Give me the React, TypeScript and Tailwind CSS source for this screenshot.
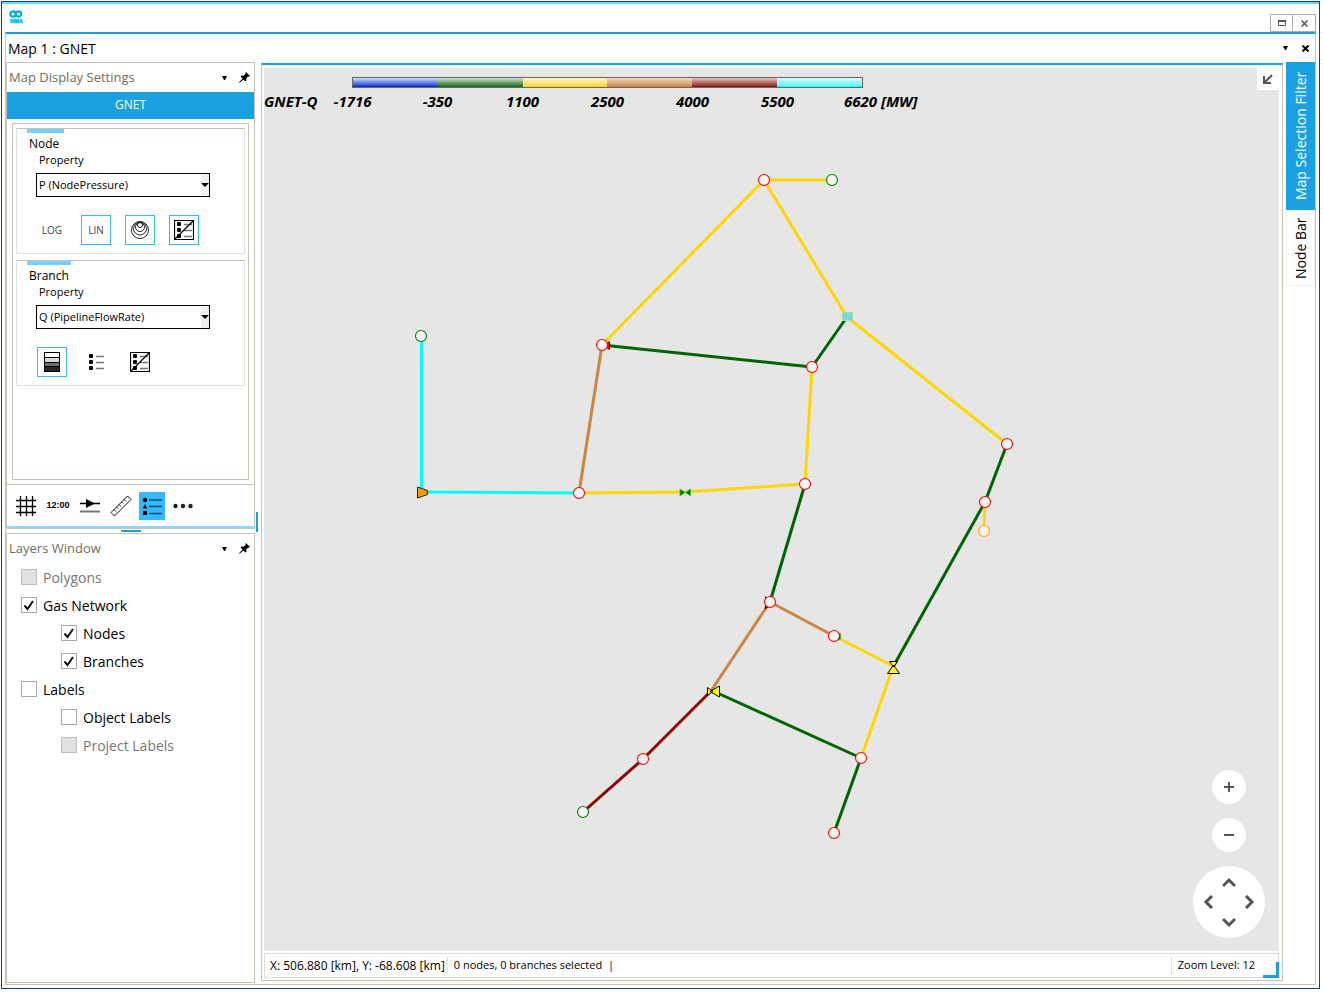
import React, { useState } from 'react';

type Point = [number, number];

const GREEN = '#006400';
const GOLD = '#ffd700';
const BROWN = '#cd853f';
const MAROON = '#8b0000';
const CYAN = '#00ffff';

const branches: { from: Point; to: Point; color: string }[] = [
  { from: [764, 180], to: [832, 180], color: GOLD },
  { from: [764, 180], to: [602, 345], color: GOLD },
  { from: [764, 180], to: [847, 317], color: GOLD },
  { from: [847, 317], to: [1007, 444], color: GOLD },
  { from: [847, 317], to: [812, 367], color: GREEN },
  { from: [602, 345], to: [812, 367], color: GREEN },
  { from: [602, 345], to: [579, 493], color: BROWN },
  { from: [421.5, 336], to: [421.5, 492], color: CYAN },
  { from: [421, 492], to: [579, 493], color: CYAN },
  { from: [579, 493], to: [685, 492], color: GOLD },
  { from: [685, 492], to: [805, 484], color: GOLD },
  { from: [812, 367], to: [805, 484], color: GOLD },
  { from: [805, 484], to: [770, 602], color: GREEN },
  { from: [1007, 444], to: [985, 502], color: GREEN },
  { from: [985, 502], to: [984, 531], color: GOLD },
  { from: [985, 502], to: [893, 667], color: GREEN },
  { from: [770, 602], to: [834, 636], color: BROWN },
  { from: [834, 636], to: [893, 666], color: GOLD },
  { from: [770, 602], to: [711, 691], color: BROWN },
  { from: [893, 667], to: [861, 758], color: GOLD },
  { from: [713, 691], to: [861, 758], color: GREEN },
  { from: [711, 691], to: [643, 759], color: MAROON },
  { from: [643, 759], to: [583, 812], color: MAROON },
  { from: [861, 758], to: [834, 833], color: GREEN },
];

const nodes: { at: Point; color: string }[] = [
  { at: [764, 180], color: '#ff0000' },
  { at: [832, 180], color: '#008000' },
  { at: [602, 345], color: '#ff0000' },
  { at: [812, 367], color: '#ff0000' },
  { at: [421, 336], color: '#008000' },
  { at: [579, 493], color: '#ff0000' },
  { at: [805, 484], color: '#ff0000' },
  { at: [1007, 444], color: '#ff0000' },
  { at: [985, 502], color: '#ff0000' },
  { at: [984, 531], color: '#ffa500' },
  { at: [770, 602], color: '#ff0000' },
  { at: [834, 636], color: '#ff0000' },
  { at: [643, 759], color: '#ff0000' },
  { at: [583, 812], color: '#008000' },
  { at: [861, 758], color: '#ff0000' },
  { at: [834, 833], color: '#ff0000' },
];

const legendColors = [
  'from-[#d9d9fa] to-[#1414c8]',
  'from-[#d3e3d3] to-[#0a640a]',
  'from-[#fff6c4] to-[#ffd200]',
  'from-[#f0dac6] to-[#cd853f]',
  'from-[#e3c6c8] to-[#860808]',
  'from-[#d4ffff] to-[#00ffff]',
];

const legendValues = ['-1716', '-350', '1100', '2500', '4000', '5500'];

const initialLayers = [
  { id: 'polygons', label: 'Polygons', checked: false, disabled: true, child: false },
  { id: 'gas', label: 'Gas Network', checked: true, disabled: false, child: false },
  { id: 'nodes', label: 'Nodes', checked: true, disabled: false, child: true },
  { id: 'branches', label: 'Branches', checked: true, disabled: false, child: true },
  { id: 'labels', label: 'Labels', checked: false, disabled: false, child: false },
  { id: 'objectLabels', label: 'Object Labels', checked: false, disabled: false, child: true },
  { id: 'projectLabels', label: 'Project Labels', checked: false, disabled: true, child: true },
];

const Caret = () => (
  <svg width="5" height="4" viewBox="0 0 5 4">
    <path d="M0 0h5L3 4H2z" fill="#000" />
  </svg>
);

const Pin = () => (
  <svg width="11" height="11" viewBox="0 0 11 11">
    <path d="M7 0l4 4-1.2.7-.8-.2-1.8 2 .3 2-1 1L4.400 7.400.6 10.800 0 10.200 3.600 6.600 1.500 4.500l1-1 2 .3 2-1.800-.1-1z" fill="#000" />
  </svg>
);

const Logo = () => (
  <svg width="14" height="14" viewBox="0 0 14 14">
    <g fill="none" stroke="#00aeef" strokeWidth="2.2">
      <circle cx="4" cy="4" r="2.700" />
      <circle cx="9.500" cy="4" r="2.700" />
    </g>
    <text x="1" y="13" fontSize="5" fontWeight="800" fill="#00aeef" stroke="#00aeef" strokeWidth=".4" fontFamily="Liberation Sans, sans-serif">
      SIMA
    </text>
  </svg>
);

const BulletList = ({ framed }: { framed?: boolean }) => (
  <svg width="20" height="20" viewBox="0 0 20 20">
    <g fill="#000">
      <rect x="3" y="2" width="4" height="4" rx="1" />
      <rect x="3" y="8" width="4" height="4" rx="1" />
      <rect x="3" y="14" width="4" height="4" rx="1" />
    </g>
    <path d="M10 4.500h8M10 10.500h8M10 16.500h8" stroke="#777" strokeWidth="1.500" />
    {framed && <path d="M.5.5h19v19H.5zM1 19L19 1" fill="none" stroke="#000" strokeWidth="1.200" />}
  </svg>
);

const Rings = () => (
  <svg width="20" height="20" viewBox="0 0 20 20" fill="none" stroke="#222" strokeWidth="1">
    <circle cx="10" cy="10" r="8.500" />
    <circle cx="10" cy="8.500" r="6.500" />
    <circle cx="10" cy="7" r="4.500" />
    <circle cx="10" cy="5" r="2.500" />
  </svg>
);

const Bands = () => (
  <svg width="16" height="20" viewBox="0 0 16 20">
    <rect y="0" width="16" height="20" fill="#000" />
    <rect x="1" y="1" width="14" height="4" fill="#fff" />
    <rect x="1" y="6" width="14" height="4" fill="#d8d8d8" />
    <rect x="1" y="11" width="14" height="3" fill="#707070" />
    <rect x="1" y="15" width="14" height="4" fill="#282828" />
  </svg>
);

const toolClass = 'flex size-[30px] items-center justify-center border text-[10px] text-[#444]';

const ToolButton = ({ label, active, children }: { label: string; active?: boolean; children: React.ReactNode }) => (
  <button aria-label={label} className={`${toolClass} ${active ? 'border-[#35b8fd]' : 'border-transparent'}`}>
    {children}
  </button>
);

interface PropertyGroupProps {
  title: string;
  value: string;
  accent: string;
  children: React.ReactNode;
}

const PropertyGroup = ({ title, value, accent, children }: PropertyGroupProps) => {
  const id = `${title.toLowerCase()}-property`;

  return (
    <section className="h-[126px] border border-[#e0e0d8] border-t-[#c4c4b4] pl-[10px]">
      <div className={`h-1 bg-[#75d1ff] ${accent}`} />
      <h2 className="ml-0.5 text-[12px] leading-[22px]">{title}</h2>
      <label htmlFor={id} className="-mt-0.5 ml-3 block text-[11px] leading-[14px]">
        Property
      </label>
      <div className="relative ml-[9px] mt-1.5 w-[174px]">
        <select id={id} className="block h-6 w-full appearance-none border border-black bg-white pl-0.5 text-[11px]">
          <option>{value}</option>
        </select>
        <span className="pointer-events-none absolute inset-y-px right-px flex w-2 items-center justify-center bg-[#f0f0f0]">
          <svg width="8" height="4" viewBox="0 0 8 4">
            <path d="M0 0h8L4 4z" fill="#000" />
          </svg>
        </span>
      </div>
      <div className="ml-[10px] mt-[18px] flex gap-[14px]">{children}</div>
    </section>
  );
};

const PanelHeader = ({ title }: { title: string }) => (
  <header className="flex h-[29px] shrink-0 items-center pl-0.5 pr-1">
    <h1 className="flex-1 text-[13px] text-[#6d6d60]">{title}</h1>
    <button aria-label={`${title} menu`} className="mr-3">
      <Caret />
    </button>
    <button aria-label={`Pin ${title}`}>
      <Pin />
    </button>
  </header>
);

const Toolbar = () => (
  <div className="flex h-[44px] shrink-0 items-center border-t border-[#c4c4b4] border-b-2 border-b-[#8fd8ff] pl-2">
    <button aria-label="Grid" className="w-6">
      <svg width="22" height="22" viewBox="0 0 22 22" stroke="#000" strokeWidth="1.300">
        <path d="M1 5.500h20M1 11.500h20M1 17.500h20M5.500 1v20M11.500 1v20M17.500 1v20" />
      </svg>
    </button>
    <button className="ml-[7px] w-6 whitespace-nowrap font-['Liberation_Sans',sans-serif] text-[9px] font-bold">12:00</button>
    <button aria-label="Flow direction" className="ml-[9px] w-6">
      <svg width="22" height="18" viewBox="0 0 22 18">
        <path d="M1 6.500h20" stroke="#000" strokeWidth="1.500" />
        <path d="M7 2l9 4.500L7 11z" fill="#000" />
        <path d="M1 14.500h20" stroke="#777" strokeWidth="2" />
      </svg>
    </button>
    <button aria-label="Measure" className="ml-[7px] w-6">
      <svg width="22" height="22" viewBox="0 0 22 22" fill="none" stroke="#111">
        <path d="M1 17.500L17.500 1 21 4.500 4.500 21z" />
        <path d="M4 14.500l2 2M6.500 12l1.500 1.500M9 9.500l2 2M11.500 7l1.500 1.500M14 4.500l2 2" />
      </svg>
    </button>
    <button aria-label="Legend" className="ml-[5px] flex h-7 w-[26px] items-center justify-center bg-[#35b8fd]">
      <svg width="20" height="20" viewBox="0 0 20 20">
        <circle cx="3" cy="4" r="2.200" />
        <path d="M.8 12.500L3 8l2.200 4.500zM1 15h4v4H1z" />
        <path d="M7 4h13M7 10.500h13M7 17.500h13" stroke="#174e70" strokeWidth="1.500" />
      </svg>
    </button>
    <button aria-label="More" className="ml-2">
      <svg width="20" height="6" viewBox="0 0 20 6" fill="#222">
        <circle cx="2.500" cy="3" r="2.200" />
        <circle cx="10" cy="3" r="2.200" />
        <circle cx="17.500" cy="3" r="2.200" />
      </svg>
    </button>
  </div>
);

const Layers = () => {
  const [layers, setLayers] = useState(initialLayers);

  const toggle = (id: string) => {
    setLayers(layers.map((layer) => (layer.id === id ? { ...layer, checked: !layer.checked } : layer)));
  };

  return (
    <ul>
      {layers.map((layer) => (
        <li key={layer.id} className={`flex h-7 items-center ${layer.child ? 'pl-[54px]' : 'pl-[14px]'}`}>
          <span className="relative size-4">
            <input
              id={layer.id}
              type="checkbox"
              checked={layer.checked}
              disabled={layer.disabled}
              onChange={() => toggle(layer.id)}
              className="block size-4 appearance-none border border-[#a9a9a9] bg-white disabled:border-[#bcbcbc] disabled:bg-[#e1e1e1]"
            />
            {layer.checked && (
              <svg className="pointer-events-none absolute inset-0" width="16" height="16" viewBox="0 0 16 16" fill="none">
                <path d="M3.500 8.500l3 3.500L12 4" stroke="#111" strokeWidth="2" />
              </svg>
            )}
          </span>
          <label htmlFor={layer.id} className={`ml-1.5 text-[14px] ${layer.disabled ? 'text-[#777]' : 'text-black'}`}>
            {layer.label}
          </label>
        </li>
      ))}
    </ul>
  );
};

const Sidebar = () => (
  <aside className="flex w-[249px] shrink-0 flex-col">
    <div className="flex h-[467px] shrink-0 flex-col border border-[#c4c4b4]">
      <PanelHeader title="Map Display Settings" />
      <button className="h-[27px] shrink-0 bg-[#1ba1e2] text-[12px] leading-[25px] pb-0.5 text-white">GNET</button>
      <div className="mx-[5px] mb-1 mt-1 flex flex-1 flex-col gap-1.5 border border-[#c4c4b4] px-[3px] pt-1">
        <PropertyGroup title="Node" value="P (NodePressure)" accent="w-[37px]">
          <ToolButton label="Logarithmic">LOG</ToolButton>
          <ToolButton label="Linear" active>LIN</ToolButton>
          <ToolButton label="Circles" active><Rings /></ToolButton>
          <ToolButton label="Hide list" active><BulletList framed /></ToolButton>
        </PropertyGroup>
        <PropertyGroup title="Branch" value="Q (PipelineFlowRate)" accent="w-11">
          <ToolButton label="Colour bands" active><Bands /></ToolButton>
          <ToolButton label="List"><BulletList /></ToolButton>
          <ToolButton label="Hide list"><BulletList framed /></ToolButton>
        </PropertyGroup>
      </div>
      <Toolbar />
    </div>
    <div className="flex h-1 shrink-0 items-center justify-center">
      <div className="h-0.5 w-5 bg-[#1ba1e2]" />
    </div>
    <div className="flex-1 border border-[#c4c4b4]">
      <PanelHeader title="Layers Window" />
      <Layers />
    </div>
  </aside>
);

const Network = () => (
  <svg className="block" width="1015" height="883" viewBox="264 68 1015 883">
    {branches.map((b, i) => (
      <line key={i} x1={b.from[0]} y1={b.from[1]} x2={b.to[0]} y2={b.to[1]} stroke={b.color} strokeWidth="3" />
    ))}
    <path d="M765.500 596.500v12l5-3M609.500 341.500v8" fill="none" stroke="#000" />
    <path d="M609 341v9l-5-4z" fill="#f00" />
    <path d="M837 633h4v7h-4z" fill={GREEN} stroke="#90ee90" />
    <path d="M680 489l5 3.500-5 3.500zM690.500 489l-5 3.500 5 3.500z" fill={GREEN} stroke="#32cd32" />
    <rect x="842.500" y="312.500" width="10" height="8" fill="#87ceeb" stroke="#90ee90" />
    <path d="M417.500 487v11l10-3.500v-4z" fill="#ff9800" stroke="#222" />
    <g fill="#ffff00" stroke="#000">
      <path d="M889.500 661.500h8L893.500 667zM893.500 665l-6 8.500h12z" />
      <path d="M707.500 687.500v8l5.500-4zM710 691.500l9.500-5.500v11z" />
    </g>
    {nodes.map((n, i) => (
      <circle key={i} cx={n.at[0]} cy={n.at[1]} r="5.500" fill="#f8f4f4" stroke={n.color} strokeWidth="1.100" />
    ))}
  </svg>
);

const Legend = () => (
  <div className="absolute left-0 top-[9px] font-['Open_Sans','Noto_Sans',sans-serif] text-[15px] font-bold italic leading-5">
    <div className="ml-[88px] flex h-[11px] w-[511px] border border-[#666]">
      {legendColors.map((color) => (
        <div key={color} className={`flex-1 bg-linear-to-b ${color}`} />
      ))}
    </div>
    <div className="mt-[3px] flex whitespace-nowrap">
      <span className="w-[46px]">GNET-Q</span>
      {legendValues.map((value) => (
        <span key={value} className="w-[85px] text-center">{value}</span>
      ))}
      <span className="pl-6">6620 [MW]</span>
    </div>
  </div>
);

const roundClass = 'flex size-[34px] items-center justify-center rounded-full bg-white';

const ZoomControls = () => (
  <div className="absolute bottom-[13px] right-[14px] flex flex-col items-center gap-[14px]">
    <button aria-label="Zoom in" className={roundClass}>
      <svg width="10" height="10" viewBox="0 0 10 10">
        <path d="M0 5h10M5 0v10" stroke="#555550" strokeWidth="2" />
      </svg>
    </button>
    <button aria-label="Zoom out" className={roundClass}>
      <svg width="10" height="10" viewBox="0 0 10 10">
        <path d="M0 5h10" stroke="#555550" strokeWidth="2" />
      </svg>
    </button>
    <div className="grid size-[72px] grid-cols-3 grid-rows-3 place-items-center rounded-full bg-white p-1.5">
      <PanButton label="Pan up" className="col-start-2" path="M1 11l6-6 6 6" />
      <PanButton label="Pan left" className="col-start-1 row-start-2" path="M10 1L4 7l6 6" />
      <PanButton label="Pan right" className="col-start-3 row-start-2" path="M4 1l6 6-6 6" />
      <PanButton label="Pan down" className="col-start-2 row-start-3" path="M1 4l6 6 6-6" />
    </div>
  </div>
);

const PanButton = ({ label, className, path }: { label: string; className: string; path: string }) => (
  <button aria-label={label} className={className}>
    <svg width="14" height="14" viewBox="0 0 14 14" fill="none">
      <path d={path} stroke="#555550" strokeWidth="3" />
    </svg>
  </button>
);

const MapPanel = () => (
  <main className="mt-px mb-0.5 flex min-w-0 flex-1 flex-col border border-t-2 border-[#c4c4b4] border-t-[#1ba1e2] pb-0.5 pl-0.5 pr-[3px] pt-[3px]">
    <div className="relative min-h-0 flex-1 overflow-hidden bg-[#e6e6e6]">
      <Network />
      <Legend />
      <button aria-label="Collapse" className="absolute right-0 top-0 flex size-[22px] items-center justify-center bg-white">
        <svg width="10" height="10" viewBox="0 0 10 10" fill="none" stroke="#555550" strokeWidth="2">
          <path d="M9 1L2 8M1 2v7h7" />
        </svg>
      </button>
      <ZoomControls />
    </div>
    <footer className="relative mt-0.5 flex h-[25px] shrink-0 items-center border border-[#dcdcd4] pl-[5px] text-[11px]">
      <span className="text-[12px]">X: 506.880 [km], Y: -68.608 [km]</span>
      <span className="ml-0.5 h-4 border-l border-dashed border-[#a8e0ff]" />
      <span className="ml-1.5">0 nodes, 0 branches selected&nbsp; |</span>
      <span className="ml-auto h-4 border-l border-dashed border-[#a8e0ff]" />
      <span className="ml-1.5 mr-[23px]">Zoom Level: 12</span>
      <span className="absolute -bottom-px -right-px size-4 border-b-[3px] border-r-[3px] border-[#1ba1e2]" />
    </footer>
  </main>
);

const App = () => {
  return (
    <div className="h-screen bg-white pb-1 pl-px pr-[3px] pt-px font-['Open_Sans','Noto_Sans',sans-serif] text-black">
      <div className="flex h-full flex-col border border-[#064a6c]">
        <div className="flex h-[30px] shrink-0 border-t-2 border-[#75d1ff] pl-[7px] pr-[3px]">
          <div className="pt-1.5">
            <Logo />
          </div>
          <div className="ml-auto mt-[10px] flex h-[18px] border border-[#b0b0a8]">
            <button aria-label="Maximize" className="flex w-[22px] items-center justify-center border-r border-[#b0b0a8]">
              <svg width="8" height="6" viewBox="0 0 8 6">
                <path d="M.5 1h7v4.500h-7z" fill="none" stroke="#555550" />
                <path d="M0 1h8" stroke="#555550" strokeWidth="2" />
              </svg>
            </button>
            <button aria-label="Close window" className="flex w-[22px] items-center justify-center">
              <svg width="7" height="7" viewBox="0 0 7 7">
                <path d="M.5.5l6 6M6.500.5l-6 6" stroke="#555550" strokeWidth="1.500" />
              </svg>
            </button>
          </div>
        </div>
        <div className="ml-[3px] mr-[3px] mb-[3px] flex min-h-0 flex-1 flex-col border border-t-2 border-[#c4c4b4] border-t-[#1ba1e2]">
          <div className="flex h-7 shrink-0 items-center pl-0.5 pr-1.5">
            <span className="flex-1 text-[14px]">Map 1 : GNET</span>
            <button aria-label="Map menu" className="mr-[14px]">
              <Caret />
            </button>
            <button aria-label="Close map">
              <svg width="7" height="7" viewBox="0 0 7 7">
                <path d="M.5.5l6 6M6.500.5l-6 6" stroke="#000" strokeWidth="2" />
              </svg>
            </button>
          </div>
          <div className="flex min-h-0 flex-1 pb-px">
            <Sidebar />
            <div className="flex w-1.5 shrink-0 flex-col pl-px">
              <div className="mt-[450px] h-5 w-0.5 shrink-0 bg-[#1ba1e2]" />
            </div>
            <MapPanel />
            <nav className="ml-[3px] flex w-[29px] shrink-0 flex-col text-[14px] leading-[29px]">
              <button className="h-[148px] rotate-180 bg-[#1ba1e2] text-white [writing-mode:vertical-rl]">
                Map Selection Filter
              </button>
              <button className="h-[76px] rotate-180 border border-[#f0f0f0] leading-[27px] [writing-mode:vertical-rl]">
                Node Bar
              </button>
            </nav>
          </div>
        </div>
      </div>
    </div>
  );
};

export default App;
